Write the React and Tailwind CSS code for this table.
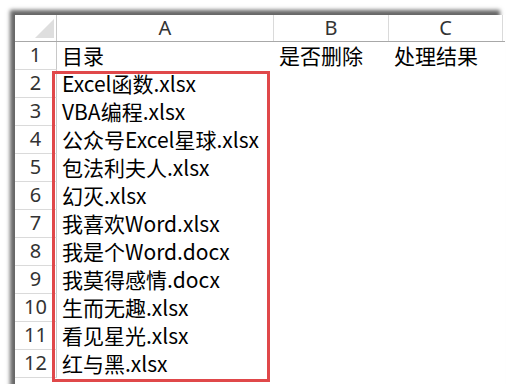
import React from 'react';

const files = [
  'Excel函数.xlsx',
  'VBA编程.xlsx',
  '公众号Excel星球.xlsx',
  '包法利夫人.xlsx',
  '幻灭.xlsx',
  '我喜欢Word.xlsx',
  '我是个Word.docx',
  '我莫得感情.docx',
  '生而无趣.xlsx',
  '看见星光.xlsx',
  '红与黑.xlsx',
];

const rows = [['目录', '是否删除', '处理结果'], ...files.map((f) => [f, '', ''])];

const font = { fontFamily: '"Noto Sans", "Noto Sans CJK SC", sans-serif' };
const cellFont = { fontFamily: '"Noto Sans CJK SC", "Noto Sans", sans-serif' };

export default function App() {
  return (
    <div className="w-[516px] h-[384px] bg-white overflow-hidden pt-[15px] pl-[15px]" style={font}>
      <div className="relative w-[490px] h-[400px] bg-white shadow-[-5px_-5px_4px_rgba(0,0,0,0.6)]">
        {/* column headers */}
        <div className="grid grid-cols-[42px_217px_115px_114px] h-[27px] border-b border-[#a8a8a8] text-[20px] text-[#333] leading-none">
          <div className="relative border-r border-[#c8c8c8]">
            <svg className="absolute left-[20px] top-[4px]" width="19" height="19" viewBox="0 0 19 19">
              <polygon points="19,0 19,19 0,19" fill="#dedede" />
            </svg>
          </div>
          <div className="flex items-end justify-center pb-[3px] border-r border-[#dadada]">A</div>
          <div className="flex items-end justify-center pb-[3px] border-r border-[#dadada]">B</div>
          <div className="flex items-end justify-center pb-[3px] border-r border-[#dadada]">C</div>
        </div>

        {/* rows */}
        {rows.map((r, i) => (
          <div key={i} className="grid grid-cols-[42px_217px_115px_114px] h-[28px] text-[21px] leading-none">
            <div className="flex items-end justify-center pb-[4px] border-r border-b border-r-[#c8c8c8] border-b-[#dadada] text-[20px] text-[#333]">
              {i + 1}
            </div>
            <div className="flex items-end pl-[5px] pb-[4px] text-black whitespace-nowrap" style={cellFont}>{r[0]}</div>
            <div className="flex items-end pl-[5px] pb-[4px] text-black whitespace-nowrap" style={cellFont}>{r[1]}</div>
            <div className="flex items-end pl-[5px] pb-[4px] text-black whitespace-nowrap" style={cellFont}>{r[2]}</div>
          </div>
        ))}

        {/* red selection box */}
        <div className="absolute left-[37px] top-[56px] w-[218px] h-[311px] border-[3px] border-[#e0484a]" />
      </div>
    </div>
  );
}
